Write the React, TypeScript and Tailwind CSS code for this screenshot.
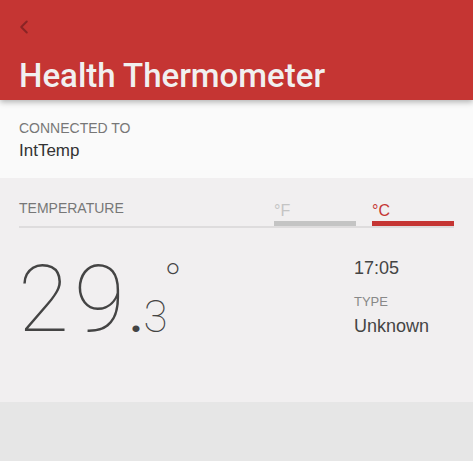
import { ChevronLeft } from 'lucide-react';

const App = () => {
  return (
    <div className="flex h-[461px] w-[473px] flex-col overflow-hidden bg-[#e6e6e6] font-['Liberation_Sans',sans-serif]">
      {/* header */}
      <header className="relative z-10 h-[100px] shrink-0 bg-[#c53533] px-[19px] shadow-[0_2px_6px_rgba(0,0,0,0.3)]">
        <ChevronLeft className="ml-[-6px] mt-[16px] text-[#8a2425]" size={22} strokeWidth={2.2} />
        <h1 className="mt-[19px] font-['Roboto',sans-serif] text-[33px] font-medium leading-[38px] text-[#f1f0f0]">
          Health Thermometer
        </h1>
      </header>

      {/* connected */}
      <section className="h-[78px] shrink-0 bg-[#fafafa] px-[19px] pt-[20px]">
        <p className="text-[14px] leading-[17px] text-[#777]">CONNECTED TO</p>
        <p className="mt-[4px] text-[17px] leading-[20px] text-[#333]">IntTemp</p>
      </section>

      {/* temperature */}
      <section className="h-[224px] shrink-0 bg-[#f1eff0] px-[19px] pt-[22px]">
        <div className="flex items-end justify-between border-b-2 border-[#dedcdd]">
          <span className="pb-[9px] text-[14px] leading-[17px] text-[#777]">TEMPERATURE</span>
          <div className="flex gap-[16px]">
            <div className="w-[82px]">
              <span className="block text-[16px] leading-[18px] text-[#c4c4c4]">°F</span>
              <div className="mt-[1px] h-[5px] bg-[#c4c4c4]" />
            </div>
            <div className="w-[82px]">
              <span className="block text-[16px] leading-[18px] text-[#c53533]">°C</span>
              <div className="mt-[1px] h-[5px] bg-[#c53533]" />
            </div>
          </div>
        </div>

        <div className="mt-[24px] flex">
          <div className="flex w-[335px] items-start">
            <span className="ml-[-1px] font-['Roboto',sans-serif] text-[93px] font-thin leading-[96px] tracking-[5px] text-[#444]">
              29
            </span>
            <span className="mt-[40px] font-['Roboto',sans-serif] text-[44px] font-thin leading-[50px] text-[#444]">
              <span className="mr-[1px] font-bold">.</span>3
            </span>
            <span className="ml-[-4px] mt-[8px] font-['Roboto',sans-serif] text-[48px] font-thin leading-[44px] text-[#444]">
              °
            </span>
          </div>
          <div className="pt-[6px]">
            <p className="text-[18px] leading-[20px] text-[#444]">17:05</p>
            <p className="mt-[16px] text-[13px] leading-[16px] text-[#888]">TYPE</p>
            <p className="mt-[5px] text-[18px] leading-[22px] text-[#444]">Unknown</p>
          </div>
        </div>
      </section>
    </div>
  );
};

export default App;
